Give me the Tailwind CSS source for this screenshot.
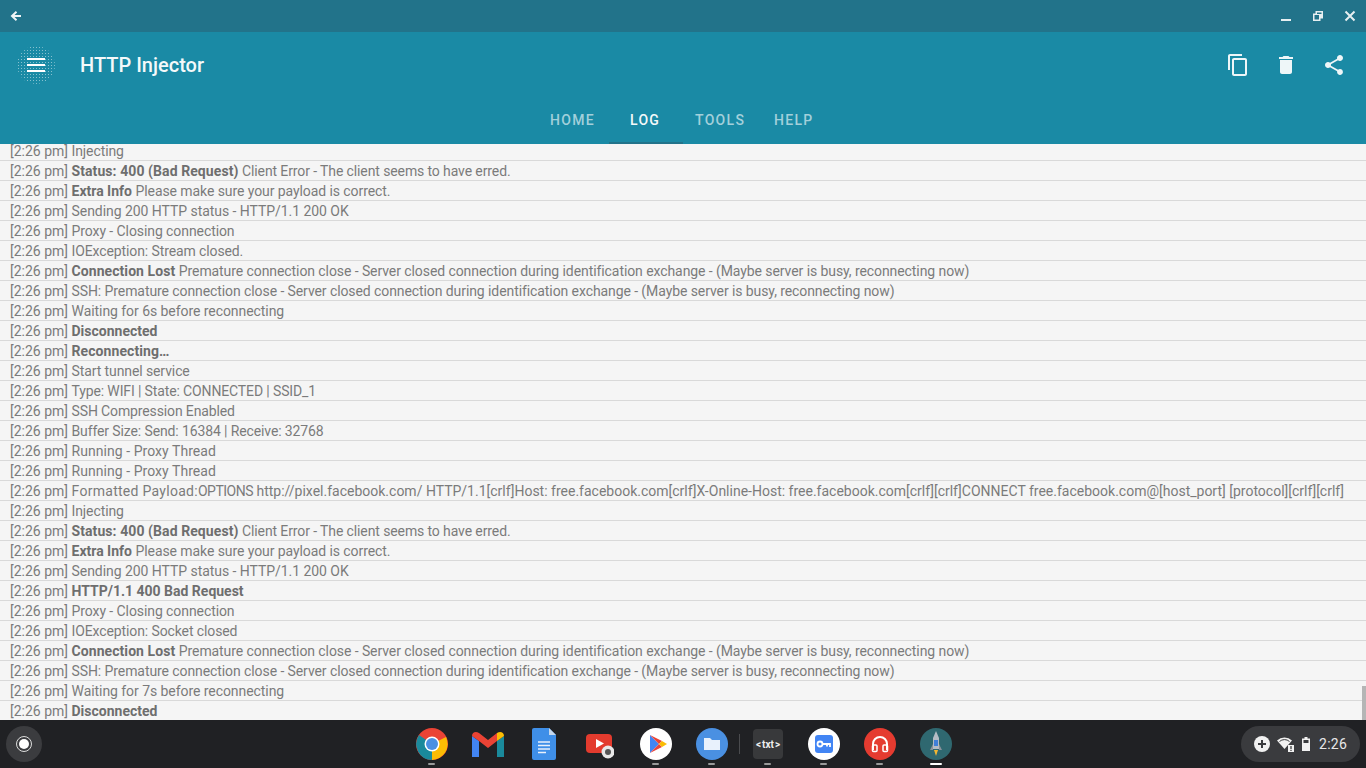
<!DOCTYPE html>
<html><head><meta charset="utf-8"><script src="https://cdn.jsdelivr.net/npm/@tailwindcss/browser@4"></script></head>
<body class="w-[1366px] h-[768px] overflow-hidden bg-[#f5f5f5] font-['Roboto',sans-serif]">
<div class="flex flex-col h-[768px]">
<div class="h-8 shrink-0 bg-[#22738a] flex items-center justify-between text-[#e8f1f3]">
  <svg class="w-3 h-3 ml-[10px]" viewBox="0 0 12 12"><path d="M11 6H3M6.500 1.800 2 6l4.500 4.200" fill="none" stroke="#f0f5f6" stroke-width="2"/></svg>
  <div class="flex items-center mr-[10px] gap-[20px]">
    <svg class="w-[12px] h-[12px]" viewBox="0 0 12 12"><rect x="1" y="9" width="10" height="2" fill="#e6eff1"/></svg>
    <svg class="w-[12px] h-[12px]" viewBox="0 0 12 12"><path d="M3.500 1H11v7.500H8.500V11H1V3.500h2.500z" fill="#e6eff1"/><rect x="2.500" y="5" width="4.500" height="4.500" fill="#22738a"/><rect x="5" y="2.500" width="4.500" height="1.500" fill="#22738a"/></svg>
    <svg class="w-[12px] h-[12px]" viewBox="0 0 12 12"><path d="M1.500 1.500l9 9M10.500 1.500l-9 9" stroke="#e6eff1" stroke-width="2"/></svg>
  </div>
</div>
<div class="h-[112px] shrink-0 bg-[#1a8aa5] flex flex-col">
  <div class="h-[65px] flex items-center shrink-0">
    <div class="ml-[17px] w-[38px] h-[38px] rounded-full flex items-center justify-center bg-[radial-gradient(circle,#ffffff77_0.8px,transparent_1px)] bg-[length:3px_3px]">
      <svg class="w-[18px] h-[14px]" viewBox="0 0 18 14"><path d="M0 1h18M0 7h18M0 13h18" stroke="#fff" stroke-width="2"/></svg>
    </div>
    <div class="ml-[25px] text-[20px] font-medium text-[#f4f9fa] leading-none">HTTP Injector</div>
    <div class="ml-auto flex items-center mr-[20px] gap-[24px]">
      <svg class="w-6 h-6" viewBox="0 0 24 24" fill="#eef6f8"><path d="M16 1H4c-1.100 0-2 .9-2 2v14h2V3h12V1zm3 4H8c-1.100 0-2 .9-2 2v14c0 1.100.9 2 2 2h11c1.100 0 2-.9 2-2V7c0-1.100-.9-2-2-2zm0 16H8V7h11v14z"/></svg>
      <svg class="w-6 h-6" viewBox="0 0 24 24" fill="#eef6f8"><path d="M6 19c0 1.100.9 2 2 2h8c1.100 0 2-.9 2-2V7H6v12zM19 4h-3.500l-1-1h-5l-1 1H5v2h14V4z"/></svg>
      <svg class="w-6 h-6" viewBox="0 0 24 24" fill="#eef6f8"><path d="M18 16.080c-.76 0-1.440.3-1.960.77L8.910 12.700c.05-.23.090-.46.090-.7s-.04-.47-.09-.7l7.050-4.110c.54.5 1.250.81 2.040.81 1.660 0 3-1.340 3-3s-1.340-3-3-3-3 1.340-3 3c0 .24.040.47.090.7L8.040 9.810C7.500 9.310 6.790 9 6 9c-1.660 0-3 1.340-3 3s1.340 3 3 3c.79 0 1.500-.31 2.040-.81l7.120 4.160c-.05.21-.08.43-.08.65 0 1.610 1.310 2.920 2.920 2.920s2.920-1.310 2.920-2.920-1.310-2.920-2.920-2.920z"/></svg>
    </div>
  </div>
  <div class="relative flex-1 text-[14px] tracking-[1.300px] font-medium leading-none">
    <div class="absolute left-[550px] top-[16px] text-[#a3d0db]">HOME</div>
    <div class="absolute left-[630px] top-[16px] text-[#f4f9fa]">LOG</div>
    <div class="absolute left-[695px] top-[16px] text-[#a3d0db]">TOOLS</div>
    <div class="absolute left-[774px] top-[16px] text-[#a3d0db]">HELP</div>
    <div class="absolute left-[609px] bottom-0 w-[74px] h-[2px] bg-[#22738a]"></div>
  </div>
</div>
<div class="relative flex-1 overflow-hidden text-[14px] text-[#7b7b7b] leading-[21px] pl-[10px]">
  <div class="-ml-[10px] pl-[10px] h-[17px] border-b border-[#d9d9d9] leading-[15px]">[2:26 pm] <span class="tracking-[-0.1px]">Injecting</span></div>
  <div class="-ml-[10px] pl-[10px] h-5 border-b border-[#d9d9d9]">[2:26 pm] <b class="font-bold text-[#6e6e6e] tracking-[0.08px]">Status: 400 (Bad Request)</b> <span class="tracking-[-0.11px]">Client Error - The client seems to have erred.</span></div>
  <div class="-ml-[10px] pl-[10px] h-5 border-b border-[#d9d9d9]">[2:26 pm] <b class="font-bold text-[#6e6e6e]">Extra Info</b> <span class="tracking-[-0.08px]">Please make sure your payload is correct.</span></div>
  <div class="-ml-[10px] pl-[10px] h-5 border-b border-[#d9d9d9]">[2:26 pm] <span class="tracking-[-0.05px]">Sending 200 HTTP status - HTTP/1.1 200 OK</span></div>
  <div class="-ml-[10px] pl-[10px] h-5 border-b border-[#d9d9d9]">[2:26 pm] <span class="tracking-[-0.08px]">Proxy - Closing connection</span></div>
  <div class="-ml-[10px] pl-[10px] h-5 border-b border-[#d9d9d9]">[2:26 pm] <span class="tracking-[-0.11px]">IOException: Stream closed.</span></div>
  <div class="-ml-[10px] pl-[10px] h-5 border-b border-[#d9d9d9]">[2:26 pm] <b class="font-bold text-[#6e6e6e] tracking-[0.07px]">Connection Lost</b> <span class="tracking-[-0.08px]">Premature connection close - Server closed connection during identification exchange - (Maybe server is busy, reconnecting now)</span></div>
  <div class="-ml-[10px] pl-[10px] h-5 border-b border-[#d9d9d9]">[2:26 pm] <span class="tracking-[-0.085px]">SSH: Premature connection close - Server closed connection during identification exchange - (Maybe server is busy, reconnecting now)</span></div>
  <div class="-ml-[10px] pl-[10px] h-5 border-b border-[#d9d9d9]">[2:26 pm] <span class="tracking-[-0.06px]">Waiting for 6s before reconnecting</span></div>
  <div class="-ml-[10px] pl-[10px] h-5 border-b border-[#d9d9d9]">[2:26 pm] <b class="font-bold text-[#6e6e6e]">Disconnected</b></div>
  <div class="-ml-[10px] pl-[10px] h-5 border-b border-[#d9d9d9]">[2:26 pm] <b class="font-bold text-[#6e6e6e] tracking-[0.08px]">Reconnecting…</b></div>
  <div class="-ml-[10px] pl-[10px] h-5 border-b border-[#d9d9d9]">[2:26 pm] <span class="tracking-[-0.1px]">Start tunnel service</span></div>
  <div class="-ml-[10px] pl-[10px] h-5 border-b border-[#d9d9d9]">[2:26 pm] <span class="tracking-[-0.13px]">Type: WIFI | State: CONNECTED | SSID_1</span></div>
  <div class="-ml-[10px] pl-[10px] h-5 border-b border-[#d9d9d9]">[2:26 pm] <span class="tracking-[-0.13px]">SSH Compression Enabled</span></div>
  <div class="-ml-[10px] pl-[10px] h-5 border-b border-[#d9d9d9]">[2:26 pm] <span class="tracking-[-0.12px]">Buffer Size: Send: 16384 | Receive: 32768</span></div>
  <div class="-ml-[10px] pl-[10px] h-5 border-b border-[#d9d9d9]">[2:26 pm] <span class="tracking-[0.05px]">Running - Proxy Thread</span></div>
  <div class="-ml-[10px] pl-[10px] h-5 border-b border-[#d9d9d9]">[2:26 pm] <span class="tracking-[0.05px]">Running - Proxy Thread</span></div>
  <div class="-ml-[10px] pl-[10px] h-5 border-b border-[#d9d9d9] whitespace-nowrap">[2:26 pm] <span class="tracking-[0.28px]">Formatted Payload:</span><span class="tracking-[-0.5px]">OPTIONS</span> http://pixel.facebook.com/ HTTP/1.1[crlf]Host: free.facebook.com[crlf]X-Online-Host: free.facebook.com[crlf][crlf]CONNECT free.facebook.com@[host_port] [protocol][crlf][crlf]</div>
  <div class="-ml-[10px] pl-[10px] h-5 border-b border-[#d9d9d9]">[2:26 pm] <span class="tracking-[-0.1px]">Injecting</span></div>
  <div class="-ml-[10px] pl-[10px] h-5 border-b border-[#d9d9d9]">[2:26 pm] <b class="font-bold text-[#6e6e6e] tracking-[0.08px]">Status: 400 (Bad Request)</b> <span class="tracking-[-0.11px]">Client Error - The client seems to have erred.</span></div>
  <div class="-ml-[10px] pl-[10px] h-5 border-b border-[#d9d9d9]">[2:26 pm] <b class="font-bold text-[#6e6e6e]">Extra Info</b> <span class="tracking-[-0.08px]">Please make sure your payload is correct.</span></div>
  <div class="-ml-[10px] pl-[10px] h-5 border-b border-[#d9d9d9]">[2:26 pm] <span class="tracking-[-0.05px]">Sending 200 HTTP status - HTTP/1.1 200 OK</span></div>
  <div class="-ml-[10px] pl-[10px] h-5 border-b border-[#d9d9d9]">[2:26 pm] <b class="font-bold text-[#6e6e6e]">HTTP/1.1 400 Bad Request</b></div>
  <div class="-ml-[10px] pl-[10px] h-5 border-b border-[#d9d9d9]">[2:26 pm] <span class="tracking-[-0.08px]">Proxy - Closing connection</span></div>
  <div class="-ml-[10px] pl-[10px] h-5 border-b border-[#d9d9d9]">[2:26 pm] <span class="tracking-[-0.11px]">IOException: Socket closed</span></div>
  <div class="-ml-[10px] pl-[10px] h-5 border-b border-[#d9d9d9]">[2:26 pm] <b class="font-bold text-[#6e6e6e] tracking-[0.07px]">Connection Lost</b> <span class="tracking-[-0.08px]">Premature connection close - Server closed connection during identification exchange - (Maybe server is busy, reconnecting now)</span></div>
  <div class="-ml-[10px] pl-[10px] h-5 border-b border-[#d9d9d9]">[2:26 pm] <span class="tracking-[-0.085px]">SSH: Premature connection close - Server closed connection during identification exchange - (Maybe server is busy, reconnecting now)</span></div>
  <div class="-ml-[10px] pl-[10px] h-5 border-b border-[#d9d9d9]">[2:26 pm] <span class="tracking-[-0.06px]">Waiting for 7s before reconnecting</span></div>
  <div class="-ml-[10px] pl-[10px] h-5">[2:26 pm] <b class="font-bold text-[#6e6e6e]">Disconnected</b></div>
  <div class="absolute right-0 bottom-0 w-[4px] h-[34px] bg-[#b5b5b5]"></div>
</div>
<div class="relative h-12 shrink-0 bg-[#202124] flex items-center">
  <div class="absolute left-[6px] top-[6px] w-9 h-9 rounded-full bg-[#3b3c3f] flex items-center justify-center">
    <div class="w-[16px] h-[16px] rounded-full border-[1.500px] border-[#dcdcdc] flex items-center justify-center"><div class="w-[10px] h-[10px] rounded-full bg-white"></div></div>
  </div>
  <svg class="absolute left-[416px] top-[8px] w-8 h-8" viewBox="0 0 32 32"><circle cx="16" cy="16" r="16" fill="#ea4335"/><path d="M16 16 30 9A16 16 0 0 1 16 32z" fill="#fbbc04"/><path d="M16 16 16 32A16 16 0 0 1 3 7z" fill="#1a8a9c"/><circle cx="16" cy="16" r="7.500" fill="#fff"/><circle cx="16" cy="16" r="6" fill="#4a90e2"/></svg>
  <svg class="absolute left-[471px] top-[11px] w-[34px] h-[26px]" viewBox="0 0 34 26"><path d="M1 5v21h7V10z" fill="#4285f4"/><path d="M26 10v16h7V5z" fill="#1a8a9c"/><path d="M1 5c0-4 4-5 7-3l9 7 9-7-0 8-9 7-9-7-7-5z" fill="#ea4335"/><path d="M26 2c3-2 7-1 7 3l-7 5z" fill="#fbbc04"/></svg>
  <svg class="absolute left-[532px] top-[8px] w-6 h-8" viewBox="0 0 24 32"><path d="M2 0h15l7 7v23a2 2 0 0 1-2 2H2a2 2 0 0 1-2-2V2a2 2 0 0 1 2-2z" fill="#3f8fe8"/><path d="M17 0l7 7h-7z" fill="#c6d8ec"/><path d="M6 14h12M6 17.500h12M6 21h12M6 24.500h8" stroke="#e8f0fb" stroke-width="1.500"/></svg>
  <svg class="absolute left-[586px] top-[13px] w-[28px] h-[26px]" viewBox="0 0 28 26"><rect width="26" height="19" y="1" rx="4" fill="#e33b2e"/><path d="M10 6l8 4.500-8 4.500z" fill="#fff"/><circle cx="22" cy="19" r="6.500" fill="#e8e8e8"/><circle cx="22" cy="19" r="3" fill="#555"/></svg>
  <svg class="absolute left-[640px] top-[8px] w-8 h-8" viewBox="0 0 32 32"><circle cx="16" cy="16" r="16" fill="#fff"/><path d="M10 7v18l9-9z" fill="#4285f4"/><path d="M10 7l9 9 3-3z" fill="#ea4335"/><path d="M10 25l9-9 3 3z" fill="#e8453c"/><path d="M22 13l5 3-5 3-3-3z" fill="#fbbc04"/></svg>
  <svg class="absolute left-[696px] top-[8px] w-8 h-8" viewBox="0 0 32 32"><circle cx="16" cy="16" r="16" fill="#4a90e2"/><path d="M8 10h6l2 2h8v10H8z" fill="#e8f1fc"/></svg>
  <div class="absolute left-[739px] top-[14px] w-px h-5 bg-[#4a4b4e]"></div>
  <div class="absolute left-[753px] top-[9px] w-[30px] h-[30px] rounded-[4px] bg-[#38393b] text-[#eee] text-[10px] font-bold flex items-center justify-center gap-[1px]"><span>&lt;</span><span>txt</span><span>&gt;</span></div>
  <svg class="absolute left-[808px] top-[8px] w-8 h-8" viewBox="0 0 32 32"><circle cx="16" cy="16" r="16" fill="#fff"/><rect x="7" y="7" width="18" height="18" rx="3" fill="#4285f4"/><circle cx="12" cy="16" r="2.500" fill="none" stroke="#fff" stroke-width="1.800"/><path d="M14.500 16H22v3M19 16v2.500" fill="none" stroke="#fff" stroke-width="1.800"/></svg>
  <svg class="absolute left-[864px] top-[8px] w-8 h-8" viewBox="0 0 32 32"><circle cx="16" cy="16" r="16" fill="#e53b30"/><path d="M9 22v-6a7 7 0 0 1 14 0v6" fill="none" stroke="#fff" stroke-width="2"/><rect x="8.500" y="17" width="4.500" height="6.500" rx="1" fill="none" stroke="#fff" stroke-width="1.500"/><rect x="19" y="17" width="4.500" height="6.500" rx="1" fill="none" stroke="#fff" stroke-width="1.500"/></svg>
  <svg class="absolute left-[920px] top-[8px] w-8 h-8" viewBox="0 0 32 32"><circle cx="16" cy="16" r="16" fill="#2f6870"/><path d="M16 3l3 7v11h-6V10z" fill="#b5bcc4"/><rect x="14" y="12" width="4" height="6" fill="#3f7fd8"/><path d="M13 16l-3 6h3zM19 16l3 6h-3z" fill="#8a929b"/><path d="M14 22h4l-2 6z" fill="#f2b632"/></svg>
  <div class="absolute left-[428px] bottom-[3px] w-[7px] h-[2px] rounded-full bg-[#9a9a9a]"></div>
  <div class="absolute left-[652px] bottom-[3px] w-[7px] h-[2px] rounded-full bg-[#9a9a9a]"></div>
  <div class="absolute left-[708px] bottom-[3px] w-[7px] h-[2px] rounded-full bg-[#9a9a9a]"></div>
  <div class="absolute left-[764px] bottom-[3px] w-[7px] h-[2px] rounded-full bg-[#9a9a9a]"></div>
  <div class="absolute left-[820px] bottom-[3px] w-[7px] h-[2px] rounded-full bg-[#9a9a9a]"></div>
  <div class="absolute left-[876px] bottom-[3px] w-[7px] h-[2px] rounded-full bg-[#9a9a9a]"></div>
  <div class="absolute left-[930px] bottom-[3px] w-[12px] h-[2px] rounded-full bg-white"></div>
  <div class="absolute left-[1241px] top-[6px] w-[119px] h-9 rounded-full bg-[#3a3b3e] flex items-center text-[#e8e8e8]">
    <svg class="ml-[13px] w-4 h-4" viewBox="0 0 16 16"><circle cx="8" cy="8" r="8" fill="#f1f1f1"/><path d="M8 4v8M4 8h8" stroke="#3a3b3e" stroke-width="2"/></svg>
    <svg class="ml-[7px] w-[17px] h-[16px]" viewBox="0 0 17 16"><path d="M0 4.500a11 11 0 0 1 15 0L7.500 13z" fill="#f1f1f1"/><path d="M2.500 5.500a7.500 7.500 0 0 1 10 0" fill="none" stroke="#3a3b3e" stroke-width="1"/><rect x="11" y="9" width="6" height="7" fill="#f1f1f1"/><rect x="13.400" y="10" width="1.200" height="3" fill="#333"/><rect x="13.400" y="13.800" width="1.200" height="1.200" fill="#333"/></svg>
    <svg class="ml-[8px] w-[8px] h-[14px]" viewBox="0 0 8 14"><path d="M2.500 0h3v1.500H8V14H0V1.500h2.500z" fill="#f1f1f1"/><rect x="1.500" y="3" width="5" height="3" fill="#3a3b3e"/></svg>
    <div class="ml-[9px] text-[14px] tracking-[0.300px] leading-none">2:26</div>
  </div>
</div>
</div>
</body></html>
